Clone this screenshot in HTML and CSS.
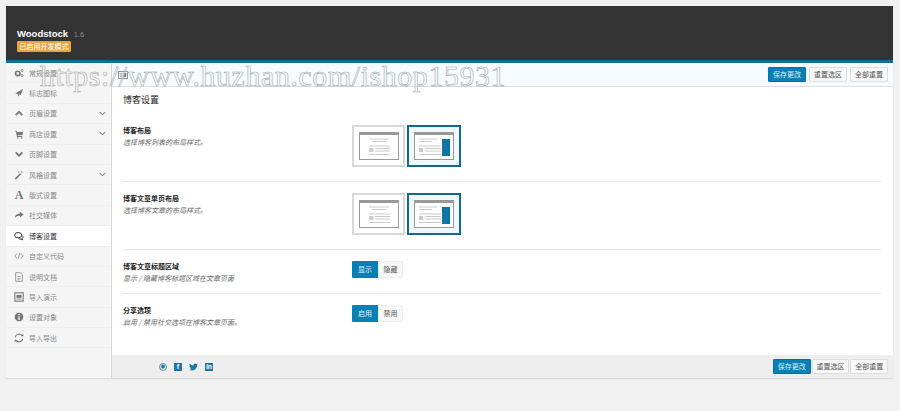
FILE: index.html
```html
<!DOCTYPE html>
<html lang="zh-CN">
<head>
    <meta charset="UTF-8">
    <title>Woodstock</title>
    <link rel="stylesheet" href="styles.css">
</head>
<body>
    <svg class="defs" width="0" height="0">
        <symbol id="layout-full" viewBox="0 0 40 28">
            <rect x="0.5" y="0.5" width="39" height="27" fill="#fff" stroke="#999"/>
            <rect x="0" y="0" width="40" height="3" fill="#999"/>
            <path d="M10 7h20M13 9.500h14" stroke="#ccc" fill="none"/>
            <rect x="10" y="16" width="4.500" height="4" fill="#ccc"/>
            <path d="M10 14h21M16 16.500h15M16 19h15M10 22.500h21" stroke="#bbb" stroke-width="0.800" fill="none"/>
        </symbol>
        <symbol id="layout-side" viewBox="0 0 40 28">
            <rect x="0.5" y="0.5" width="39" height="27" fill="#fff" stroke="#999"/>
            <rect x="0" y="0" width="40" height="3" fill="#999"/>
            <path d="M5 7h18M5 9.500h13" stroke="#ccc" fill="none"/>
            <rect x="5" y="16" width="4" height="4" fill="#ccc"/>
            <path d="M5 14h22M11 16.500h16M11 19h16M5 22.500h22" stroke="#bbb" stroke-width="0.800" fill="none"/>
            <rect x="28" y="7" width="8" height="17" fill="#0f76a3"/>
        </symbol>
    </svg>

    <div class="panel">
        <header class="top">
            <div class="brand">Woodstock <span class="version">1.6</span></div>
            <span class="dev-badge">已启用开发模式</span>
        </header>
        <div class="top-line"></div>
        <div class="columns">
            <nav class="sidebar">
                <a class="nav-item">
                    <svg class="nav-icon" viewBox="0 0 12 12"><circle cx="4.500" cy="6.500" r="2.600" fill="none" stroke="#777" stroke-width="2"/><circle cx="9.800" cy="3" r="1.300" fill="none" stroke="#777"/><circle cx="9.800" cy="9" r="1.300" fill="none" stroke="#777"/></svg>
                    <span>常规设置</span>
                </a>
                <a class="nav-item">
                    <svg class="nav-icon" viewBox="0 0 12 12"><path d="M11 1 7.800 9 6.500 7.500 5 10.500 4.300 7.200 1.500 6.200 3.800 5.200z" fill="#777"/></svg>
                    <span>标志图标</span>
                </a>
                <a class="nav-item">
                    <svg class="nav-icon" viewBox="0 0 12 12"><path d="M2 8.500 6 4.500l4 4" fill="none" stroke="#777" stroke-width="2.200"/></svg>
                    <span>页眉设置</span>
                    <svg class="nav-arrow" viewBox="0 0 10 6"><path d="M1 1l4 3.500L9 1" fill="none" stroke="#888" stroke-width="1.500"/></svg>
                </a>
                <a class="nav-item">
                    <svg class="nav-icon" viewBox="0 0 12 12"><path d="M1 2h2l.5 1.500H11L10 7.500H4.200L4.500 8.500H10V9.500H3.500L2.300 3H1z" fill="#777"/><circle cx="4.500" cy="10.800" r="1" fill="#777"/><circle cx="9" cy="10.800" r="1" fill="#777"/></svg>
                    <span>商店设置</span>
                    <svg class="nav-arrow" viewBox="0 0 10 6"><path d="M1 1l4 3.500L9 1" fill="none" stroke="#888" stroke-width="1.500"/></svg>
                </a>
                <a class="nav-item">
                    <svg class="nav-icon" viewBox="0 0 12 12"><path d="M2 4l4 4 4-4" fill="none" stroke="#777" stroke-width="2.200"/></svg>
                    <span>页脚设置</span>
                </a>
                <a class="nav-item">
                    <svg class="nav-icon" viewBox="0 0 12 12"><path d="M1.500 11 8 4.500" stroke="#777" stroke-width="2"/><path d="M9.500 1l.4 1.100L11 2.500l-1.100.4-.4 1.100-.4-1.100L8 2.500l1.100-.4zM5.500 1.500l.3.700.7.300-.7.300-.3.700-.3-.7-.7-.3.700-.3z" fill="#777"/></svg>
                    <span>风格设置</span>
                    <svg class="nav-arrow" viewBox="0 0 10 6"><path d="M1 1l4 3.500L9 1" fill="none" stroke="#888" stroke-width="1.500"/></svg>
                </a>
                <a class="nav-item">
                    <span class="nav-glyph">A</span>
                    <span>版式设置</span>
                </a>
                <a class="nav-item">
                    <svg class="nav-icon" viewBox="0 0 12 12"><path d="M7 2l4.500 3.500L7 9V6.800C4.500 6.800 2.500 7.500 1 10c0-3.500 2.500-5.700 6-5.800z" fill="#777"/></svg>
                    <span>社交媒体</span>
                </a>
                <a class="nav-item is-active">
                    <svg class="nav-icon" viewBox="0 0 12 12"><ellipse cx="5" cy="5" rx="4.300" ry="3.200" fill="#fff" stroke="#333" stroke-width="1.200"/><path d="M9.800 5.500c1.300 1.200 1.200 2.800 0 3.700l.5 1.500-2-1c-1 .2-2 0-2.800-.6" fill="none" stroke="#333" stroke-width="1.200"/></svg>
                    <span>博客设置</span>
                </a>
                <a class="nav-item">
                    <svg class="nav-icon" viewBox="0 0 12 12"><path d="M3.500 3 1 6l2.500 3M8.500 3 11 6 8.500 9M7 2.500 5 9.500" fill="none" stroke="#888"/></svg>
                    <span>自定义代码</span>
                </a>
                <a class="nav-item">
                    <svg class="nav-icon" viewBox="0 0 12 12"><path d="M2 .8h5.500L10 3.300v7.900H2z" fill="none" stroke="#888"/><path d="M4 5.500h4M4 7.500h4M4 9.300h3" stroke="#888" stroke-width="0.800"/></svg>
                    <span>说明文档</span>
                </a>
                <a class="nav-item">
                    <svg class="nav-icon" viewBox="0 0 12 12"><rect x="1" y="1" width="10" height="10" fill="none" stroke="#777" stroke-width="1.300"/><rect x="3" y="3.500" width="6" height="3.500" fill="#777"/><path d="M3 8.500h6" stroke="#777"/></svg>
                    <span>导入演示</span>
                </a>
                <a class="nav-item">
                    <svg class="nav-icon" viewBox="0 0 12 12"><circle cx="6" cy="6" r="5.200" fill="#777"/><path d="M6 2.500v1.300M6 5.200v4.300" stroke="#fff" stroke-width="1.500"/></svg>
                    <span>设置对象</span>
                </a>
                <a class="nav-item">
                    <svg class="nav-icon" viewBox="0 0 12 12"><path d="M1.500 5A4.600 4.600 0 0 1 9.500 3M10.500 7A4.600 4.600 0 0 1 2.500 9" fill="none" stroke="#777" stroke-width="1.400"/><path d="M8 3.800h3.200V.8zM4 8.200H.8v3z" fill="#777"/></svg>
                    <span>导入导出</span>
                </a>
            </nav>
            <main class="content">
                <div class="save-bar">
                    <span class="expand-btn">
                        <svg viewBox="0 0 12 10" width="10" height="8"><rect x="0.500" y="0.500" width="11" height="9" fill="none" stroke="#777"/><path d="M2 3h3M2 5h3M2 7h3" stroke="#777" stroke-width="0.800"/><rect x="6.500" y="2.500" width="3.500" height="5" fill="#777"/></svg>
                    </span>
                    <div class="actions">
                        <button class="btn btn-primary">保存更改</button>
                        <button class="btn">重置选区</button>
                        <button class="btn">全部重置</button>
                    </div>
                </div>
                <div class="settings">
                    <h2 class="section-title">博客设置</h2>
                    <div class="row row-layout row-first">
                        <div class="row-label">
                            <h3>博客布局</h3>
                            <p>选择博客列表的布局样式。</p>
                        </div>
                        <div class="thumbs">
                            <span class="thumb"><svg width="40" height="28"><use href="#layout-full"/></svg></span>
                            <span class="thumb is-selected"><svg width="40" height="28"><use href="#layout-side"/></svg></span>
                        </div>
                    </div>
                    <div class="row row-layout">
                        <div class="row-label">
                            <h3>博客文章单页布局</h3>
                            <p>选择博客文章的布局样式。</p>
                        </div>
                        <div class="thumbs">
                            <span class="thumb"><svg width="40" height="28"><use href="#layout-full"/></svg></span>
                            <span class="thumb is-selected"><svg width="40" height="28"><use href="#layout-side"/></svg></span>
                        </div>
                    </div>
                    <div class="row row-switch">
                        <div class="row-label">
                            <h3>博客文章标题区域</h3>
                            <p>显示 / 隐藏博客标题区域在文章页面</p>
                        </div>
                        <div class="switch">
                            <span class="switch-on">显示</span><span class="switch-off">隐藏</span>
                        </div>
                    </div>
                    <div class="row row-switch">
                        <div class="row-label">
                            <h3>分享选项</h3>
                            <p>启用 / 禁用社交选项在博客文章页面。</p>
                        </div>
                        <div class="switch">
                            <span class="switch-on">启用</span><span class="switch-off">禁用</span>
                        </div>
                    </div>
                </div>
                <footer class="foot">
                    <div class="social">
                        <svg viewBox="0 0 10 10" width="8" height="8"><circle cx="5" cy="5" r="4.300" fill="none" stroke="#2a7ea8"/><circle cx="5" cy="4.500" r="2.500" fill="#2a7ea8"/></svg>
                        <span class="social-box">f</span>
                        <svg viewBox="0 0 12 10" width="9" height="8"><path d="M12 1.300c-.4.200-.9.300-1.400.4.500-.3.900-.8 1-1.300-.5.300-1 .5-1.500.6A2.500 2.500 0 0 0 5.900 3C3.900 2.900 2.100 2 .8.400c-.7 1.100-.3 2.600.8 3.300-.4 0-.8-.1-1.100-.3 0 1.200.8 2.200 2 2.500-.4.100-.8.100-1.100 0 .3 1 1.300 1.700 2.300 1.700-1 .8-2.300 1.200-3.700 1 1.100.7 2.400 1.100 3.800 1.100 4.600 0 7.200-3.900 7-7.300.5-.4.900-.8 1.200-1.100z" fill="#1f77a5"/></svg>
                        <span class="social-box">in</span>
                    </div>
                    <div class="actions">
                        <button class="btn btn-primary">保存更改</button>
                        <button class="btn">重置选区</button>
                        <button class="btn">全部重置</button>
                    </div>
                </footer>
            </main>
        </div>
    </div>

    <div class="watermark">https://www.huzhan.com/ishop15931</div>
</body>
</html>
```

FILE: styles.css
```css
body {
    margin: 0;
    height: 411px;
    overflow: hidden;
    background-color: #f1f1f1;
    font-family: "Noto Sans CJK SC", "Liberation Sans", sans-serif;
    font-size: 7px;
    color: #555;
    position: relative;
}
.defs {
    position: absolute;
}
.panel {
    margin: 6px 7px 0 6px;
    box-shadow: 0 1px 1px #ddd;
}
.top {
    height: 54px;
    background-color: #333;
    padding: 22px 0 0 11px;
    box-sizing: border-box;
}
.brand {
    font-family: "Liberation Sans", sans-serif;
    font-size: 9.5px;
    font-weight: bold;
    color: #fff;
    line-height: 12px;
}
.version {
    font-size: 7.5px;
    font-weight: normal;
    color: #888;
    margin-left: 3px;
}
.dev-badge {
    display: block;
    width: 54px;
    height: 11px;
    line-height: 11px;
    background-color: #e9a441;
    color: #fff;
    text-align: center;
    border-radius: 1px;
}
.top-line {
    height: 3px;
    background-color: #0f6f9b;
}
.columns {
    display: flex;
    height: 315px;
}
.sidebar {
    width: 105px;
    background-color: #f5f5f5;
    border-right: 1px solid #d8d8d8;
}
.nav-item {
    display: flex;
    align-items: center;
    height: 20.4px;
    box-sizing: border-box;
    padding: 0 5px 0 8px;
    color: #888;
    border-bottom: 1px solid #eee;
}
.nav-icon {
    width: 10px;
    height: 10px;
    margin-right: 5px;
    flex: none;
}
.nav-glyph {
    width: 10px;
    margin-right: 5px;
    font-family: "Liberation Serif", serif;
    font-size: 12px;
    font-weight: bold;
    line-height: 10px;
    text-align: center;
    color: #777;
}
.nav-arrow {
    width: 7px;
    height: 5px;
    margin-left: auto;
}
.nav-item.is-active {
    background-color: #fff;
    color: #333;
}
.content {
    flex: 1;
    display: flex;
    flex-direction: column;
    background-color: #fff;
}
.save-bar {
    height: 24px;
    box-sizing: border-box;
    display: flex;
    align-items: center;
    justify-content: space-between;
    padding: 0 5px 0 5px;
    background-color: #f5fbfe;
    border-bottom: 1px solid #ddd;
}
.expand-btn {
    display: flex;
    align-items: center;
    justify-content: center;
    width: 11px;
    height: 10px;
}
.actions {
    display: flex;
    gap: 3px;
}
.btn {
    height: 15px;
    width: 38px;
    padding: 0;
    font-family: inherit;
    font-size: 7px;
    line-height: 13px;
    color: #555;
    background-color: #f7f7f7;
    border: 1px solid #ddd;
    border-radius: 1px;
}
.btn-primary {
    background-color: #0a7fb5;
    border-color: #0a70a0;
    color: #d8eef8;
}
.settings {
    flex: 1;
    padding: 0 12px 0 11px;
}
.section-title {
    margin: 0;
    padding-top: 6px;
    font-size: 9px;
    font-weight: normal;
    line-height: 13px;
    color: #222;
}
.row {
    display: flex;
    border-bottom: 1px solid #e8e8e8;
}
.row:last-child {
    border-bottom: none;
}
.row-layout {
    padding-top: 11px;
    height: 68px;
    box-sizing: border-box;
}
.row-first {
    height: 76px;
    padding-top: 19px;
}
.row-switch {
    height: 44px;
    box-sizing: border-box;
    padding-top: 11px;
}
.row-label {
    width: 229px;
}
.row-label h3 {
    margin: 0;
    font-size: 7px;
    line-height: 11px;
    color: #222;
}
.row-label p {
    margin: 1px 0 0;
    font-size: 7px;
    line-height: 10px;
    font-style: italic;
    color: #666;
}
.thumbs {
    display: flex;
    gap: 2px;
}
.thumb {
    display: flex;
    align-items: center;
    justify-content: center;
    width: 53px;
    height: 42px;
    box-sizing: border-box;
    border: 2px solid #d8d8d8;
    background-color: #fff;
}
.thumb.is-selected {
    width: 54px;
    border-color: #14688c;
    background-color: #eff9fd;
}
.switch {
    display: flex;
    height: 17px;
    line-height: 17px;
    text-align: center;
}
.switch-on {
    width: 26px;
    background-color: #0a7fb5;
    color: #e4f3fa;
    border-radius: 1px 0 0 1px;
}
.switch-off {
    width: 25px;
    background-color: #f7f7f7;
    border: 1px solid #eee;
    box-sizing: border-box;
    line-height: 15px;
    color: #555;
}
.foot {
    height: 23px;
    display: flex;
    align-items: center;
    justify-content: space-between;
    padding: 0 5px 0 47px;
    background-color: #eee;
}
.foot .actions {
    gap: 1px;
}
.foot .btn {
    width: 37.67px;
}
.social {
    display: flex;
    align-items: center;
    gap: 7px;
}
.social-box {
    display: block;
    width: 8px;
    height: 8px;
    line-height: 8px;
    background-color: #1f77a5;
    color: #fff;
    font-family: "Liberation Sans", sans-serif;
    font-size: 7px;
    font-weight: bold;
    text-align: center;
}
/* stamped over the screenshot */
.watermark {
    position: absolute;
    left: 40px;
    top: 58px;
    font-family: "Liberation Serif", serif;
    font-size: 30px;
    line-height: 36px;
    letter-spacing: 0.55px;
    white-space: nowrap;
    color: rgba(255, 255, 255, 0.3);
    -webkit-text-stroke: 0.6px #aaa;
}
```
